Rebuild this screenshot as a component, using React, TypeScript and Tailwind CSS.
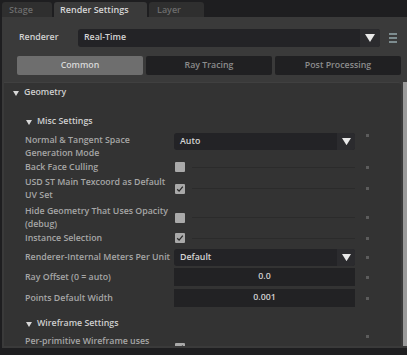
import React from "react";

const font = { fontFamily: '"Open Sans", "Noto Sans", sans-serif' };

function Dot() {
  return <div className="w-[3px] h-[3px] bg-[#5c5c5c] ml-[11px] shrink-0" />;
}

function Arrow({ size = 9 }: { size?: number }) {
  return (
    <svg width={size} height={size * 0.8} viewBox="0 0 10 8">
      <path d="M0 0 L10 0 L5 8 Z" fill="#e8e8e8" />
    </svg>
  );
}

function Dropdown({ text }: { text: string }) {
  return (
    <div className="w-[181px] h-[17px] flex bg-[#232326] rounded-[3px] overflow-hidden shrink-0">
      <div className="flex-1 flex items-center pl-[6px] text-[8.8px] text-[#d4d4d4]">{text}</div>
      <div className="w-[18px] flex items-center justify-center bg-[#2b2b2e]">
        <Arrow />
      </div>
    </div>
  );
}

function Check({ checked }: { checked: boolean }) {
  return (
    <div className="flex items-center w-[181px] shrink-0">
      <div className="ml-[1px] w-[10px] h-[10px] bg-[#a9a9a9] rounded-[1px] flex items-center justify-center shrink-0">
        {checked && (
          <svg width="8" height="8" viewBox="0 0 8 8">
            <path d="M1.2 4.2 L3.1 6.1 L6.8 1.6" stroke="#2a2a2a" strokeWidth="1.3" fill="none" />
          </svg>
        )}
      </div>
      <div className="ml-[7px] flex-1 h-px bg-[#2b2b2b]" />
    </div>
  );
}

function Field({ text }: { text: string }) {
  return (
    <div className="w-[181px] h-[18px] bg-[#222224] flex items-center justify-center text-[8.8px] text-[#d2d2d2] shrink-0">
      {text}
    </div>
  );
}

function Row({
  label,
  children,
  className = "",
}: {
  label: React.ReactNode;
  children: React.ReactNode;
  className?: string;
}) {
  return (
    <div className={"flex items-center shrink-0 " + className}>
      <div className="w-[170px] pl-[21px] pr-[2px] text-[8.8px] leading-[12.5px] text-[#a6a6a6] shrink-0 whitespace-nowrap">
        {label}
      </div>
      {children}
      <Dot />
    </div>
  );
}

function Tri() {
  return (
    <svg width="6" height="5" viewBox="0 0 6 5" className="mr-[5px]">
      <path d="M0 0 L6 0 L3 5 Z" fill="#d8d8d8" />
    </svg>
  );
}

export default function App() {
  return (
    <div className="w-[407px] h-[355px] bg-[#1e1e20] overflow-hidden font-semibold" style={font}>
      {/* tabs */}
      <div className="flex h-[17px] items-end pl-[2px] gap-[2px]">
        <div className="w-[50px] h-[15px] bg-[#2f2f2f] rounded-t-[3px] text-[9px] text-[#6c6c6c] pl-[7px] leading-[15px]">Stage</div>
        <div className="w-[93px] h-[15px] bg-[#3a3a3a] rounded-t-[3px] text-[9px] text-[#d6d6d6] pl-[6px] leading-[15px]">Render Settings</div>
        <div className="w-[55px] h-[15px] bg-[#2f2f2f] rounded-t-[3px] text-[9px] text-[#6c6c6c] pl-[8px] leading-[15px]">Layer</div>
      </div>
      {/* panel */}
      <div className="ml-[2px] w-[405px] h-[331px] bg-[#3a3a3a] flex flex-col overflow-hidden">
        <div className="flex items-center mt-[12px] h-[18px] shrink-0">
          <div className="w-[76px] pl-[17px] text-[8.8px] text-[#d2d2d2]">Renderer</div>
          <div className="w-[302px] h-[18px] flex bg-[#232326] rounded-[3px] overflow-hidden">
            <div className="flex-1 flex items-center pl-[6px] text-[8.8px] text-[#d4d4d4]">Real-Time</div>
            <div className="w-[20px] flex items-center justify-center bg-[#2b2b2e]">
              <Arrow size={10} />
            </div>
          </div>
          <div className="ml-[9px] flex flex-col gap-[2px]">
            <div className="w-[8px] h-[2px] bg-[#7d8c8f]" />
            <div className="w-[8px] h-[2px] bg-[#7d8c8f]" />
            <div className="w-[8px] h-[2px] bg-[#7d8c8f]" />
          </div>
        </div>
        <div className="flex mt-[9px] ml-[15px] gap-[3px] h-[19px] shrink-0">
          <div className="w-[126px] bg-[#6e6e6e] rounded-[2px] flex items-center justify-center text-[8.8px] text-[#d8d8d8]">Common</div>
          <div className="w-[126px] bg-[#202022] rounded-[2px] flex items-center justify-center text-[8.8px] text-[#8c8c8c]">Ray Tracing</div>
          <div className="w-[126px] bg-[#202022] rounded-[2px] flex items-center justify-center text-[8.8px] text-[#8c8c8c]">Post Processing</div>
        </div>
        {/* frame */}
        <div className="mt-[7px] ml-[2px] flex h-[264px] shrink-0">
          <div className="w-[397px] h-full bg-[#333333] border-t border-[#404040] rounded-tr-[3px] flex flex-col overflow-hidden">
            <div className="flex items-center h-[12px] mt-[4px] pl-[9px] text-[8.8px] text-[#cfcfcf] shrink-0">
              <Tri />
              Geometry
            </div>
            <div className="flex items-center h-[12px] mt-[17px] pl-[22px] text-[8.8px] text-[#cfcfcf] shrink-0">
              <Tri />
              Misc Settings
            </div>
            <Row label={<>Normal &amp; Tangent Space<br />Generation Mode</>} className="mt-[6px] !items-start">
              <div className="mt-[-1px]"><Dropdown text="Auto" /></div>
            </Row>
            <Row label="Back Face Culling" className="mt-[2px] h-[12px]">
              <Check checked={false} />
            </Row>
            <Row label={<>USD ST Main Texcoord as Default<br />UV Set</>} className="mt-[3px]">
              <Check checked={true} />
            </Row>
            <Row label={<>Hide Geometry That Uses Opacity<br />(debug)</>} className="mt-[4px]">
              <Check checked={false} />
            </Row>
            <Row label="Instance Selection" className="mt-[2px] h-[12px]">
              <Check checked={true} />
            </Row>
            <Row label="Renderer-Internal Meters Per Unit" className="mt-[5px] h-[17px]">
              <Dropdown text="Default" />
            </Row>
            <Row label="Ray Offset (0 = auto)" className="mt-[2px] h-[18px]">
              <Field text="0.0" />
            </Row>
            <Row label="Points Default Width" className="mt-[3px] h-[18px]">
              <Field text="0.001" />
            </Row>
            <div className="flex items-center h-[12px] mt-[11px] pl-[22px] text-[8.8px] text-[#cfcfcf] shrink-0">
              <Tri />
              Wireframe Settings
            </div>
            <Row label="Per-primitive Wireframe uses" className="mt-[5px] h-[12px] !items-start">
              <div className="mt-[8px]"><Check checked={true} /></div>
            </Row>
          </div>
          <div className="ml-[2px] w-[4px] bg-[#9a9a9a] h-full" />
        </div>
        <div className="h-[2px] bg-[#3a3a3a] shrink-0" />
      </div>
    </div>
  );
}
